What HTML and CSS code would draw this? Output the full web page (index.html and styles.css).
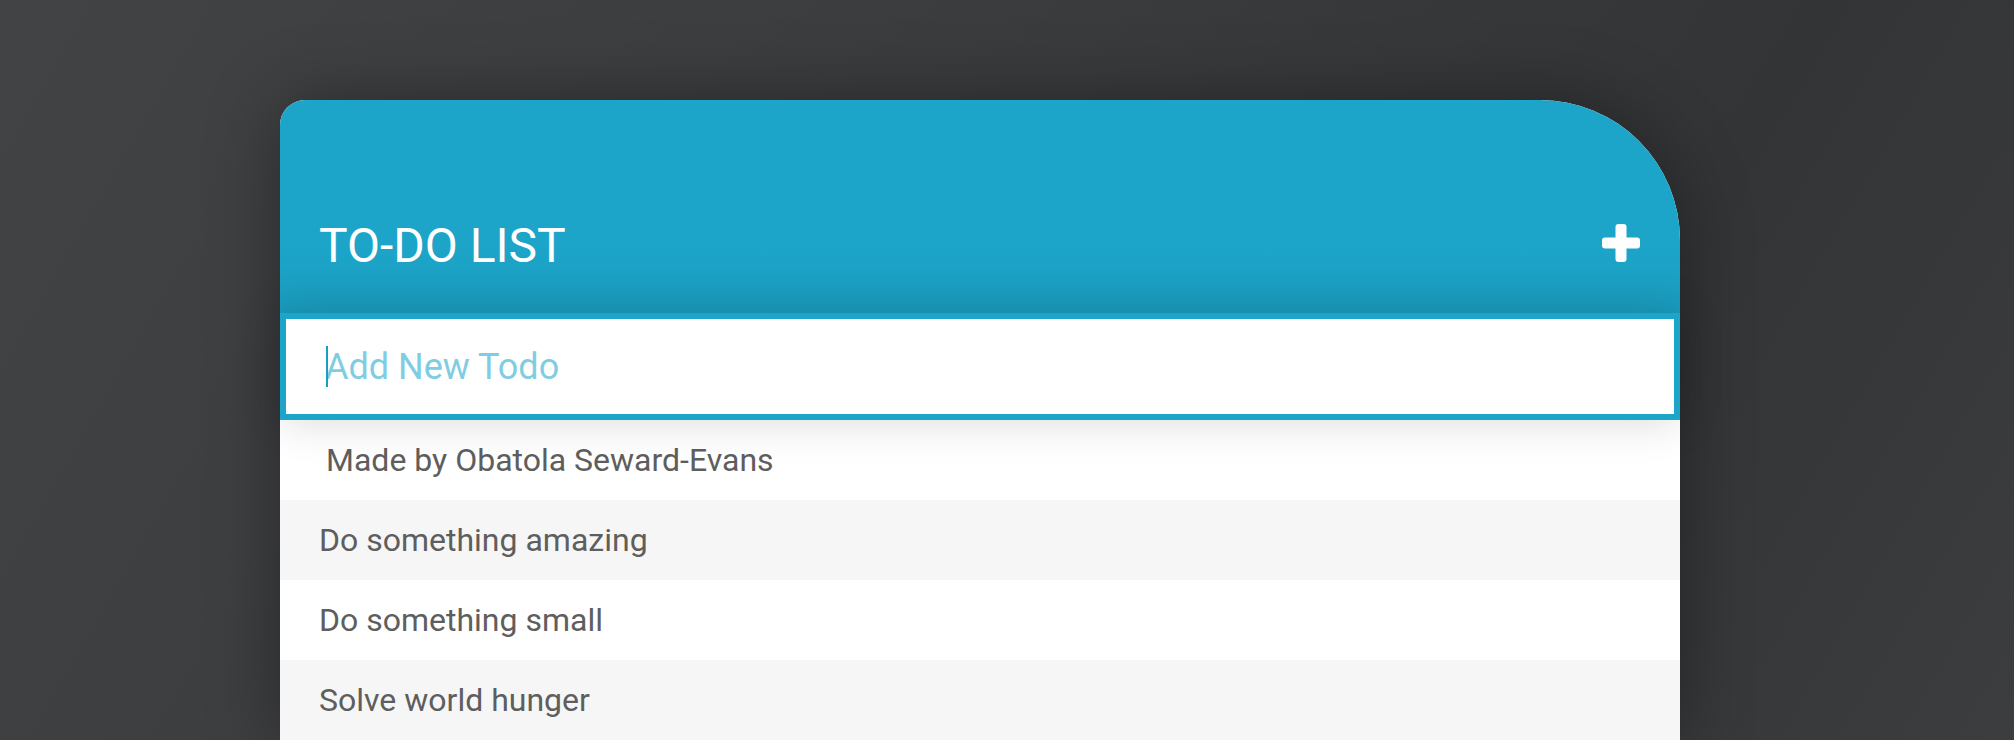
FILE: index.html
```html
<!DOCTYPE html>
<html lang="en">
<head>
<meta charset="utf-8">
<title>To-Do List</title>
<link rel="stylesheet" href="styles.css">
</head>
<body>
<main class="page">
  <section class="card">
    <header class="card-header">
      <h1 class="title">TO-DO LIST</h1>
      <button class="add-btn" aria-label="Add todo">
        <svg width="38" height="38" viewBox="0 0 38 38"><rect x="13.5" y="0" width="11" height="38" rx="3" fill="#fff"/><rect x="0" y="13.5" width="38" height="11" rx="3" fill="#fff"/></svg>
      </button>
    </header>
    <div class="input-wrap">
      <input class="new-todo" type="text" placeholder="Add New Todo">
      <span class="caret"></span>
    </div>
    <ul class="todos">
      <li class="credit">Made by Obatola Seward-Evans</li>
      <li class="todo odd">Do something amazing</li>
      <li class="todo">Do something small</li>
      <li class="todo odd">Solve world hunger</li>
    </ul>
  </section>
</main>
</body>
</html>
```
FILE: styles.css
```css
* { box-sizing: border-box; }
html, body { margin: 0; height: 100%; }
body {
  background: linear-gradient(120deg, #424345 0%, #3a3b3d 45%, #333436 75%, #3c3d3f 100%);
  font-family: Roboto, "Liberation Sans", sans-serif;
  overflow: hidden;
}
.page {
  padding: 100px 0 0 280px;
}
.card {
  width: 1400px;
  background: #fff;
  border-radius: 25px 140px 0 0;
  box-shadow: 0 0 70px rgba(0,0,0,0.35);
}
.card-header {
  height: 213px;
  background: linear-gradient(to bottom, #1ca5c9 0%, #1ca5c9 70%, #1a9bbd 100%);
  border-radius: 25px 140px 0 0;
  display: flex;
  align-items: flex-end;
  justify-content: space-between;
  padding: 0 40px 43px 39px;
}
.title {
  margin: 0;
  font-size: 48px;
  line-height: 48px;
  font-weight: 400;
  color: #fff;
}
.add-btn {
  border: 0;
  background: none;
  padding: 0;
  width: 38px;
  height: 38px;
  margin-bottom: 8px;
  display: block;
}
.add-btn svg { display: block; }
.input-wrap {
  position: relative;
  z-index: 1;
  box-shadow: 0 0 45px rgba(0,0,0,0.16);
}
.new-todo {
  display: block;
  width: 100%;
  height: 107px;
  border: 6px solid #1ca5c9;
  padding: 0 0 0 39px;
  font-family: Roboto, "Liberation Sans", sans-serif;
  font-size: 36px;
  color: #444;
  background: #fff;
  outline: none;
}
.new-todo::placeholder { color: #7fcde3; }
.caret {
  position: absolute;
  left: 46px;
  top: 33px;
  width: 2px;
  height: 41px;
  background: #1a9dc0;
}
.todos {
  list-style: none;
  margin: 0;
  padding: 0;
}
.todos li {
  height: 80px;
  display: flex;
  align-items: center;
  font-size: 32px;
  color: #5e5e5e;
  background: #fff;
}
.credit { padding-left: 46px; }
.todo { padding-left: 39px; }
.todo.odd { background: #f6f6f6; }
```
